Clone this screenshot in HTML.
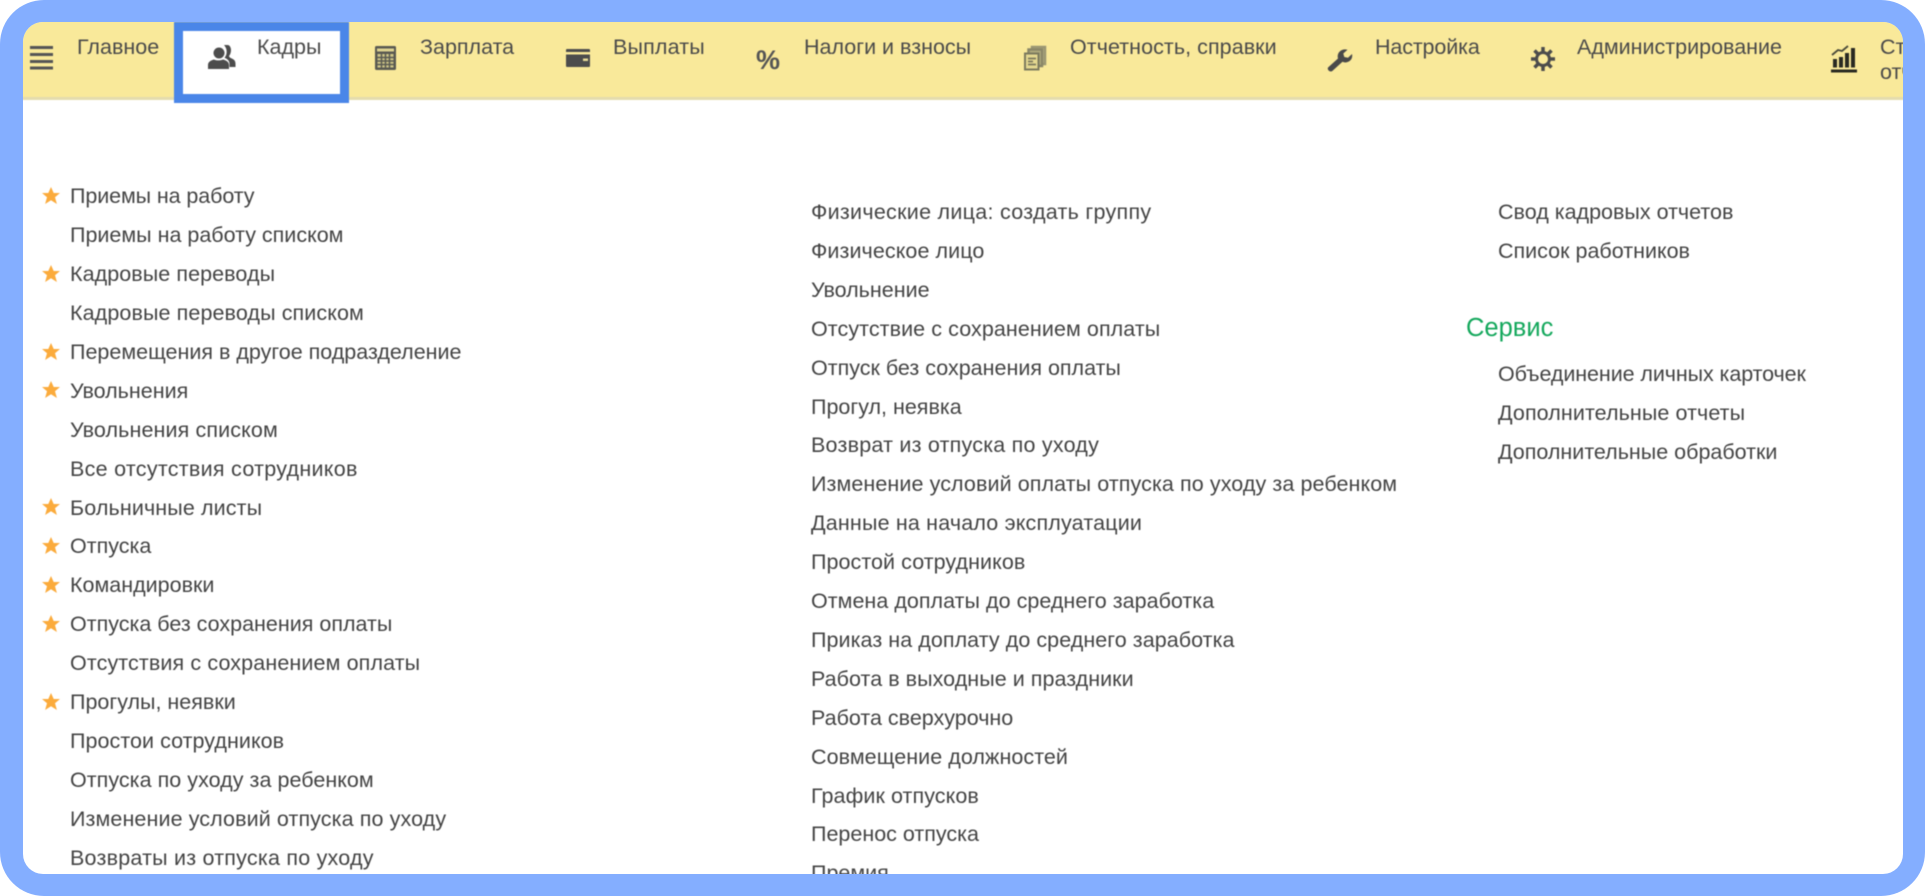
<!DOCTYPE html>
<html lang="ru">
<head>
<meta charset="utf-8">
<title>Кадры</title>
<style>
html,body{margin:0;padding:0;width:1925px;height:896px;overflow:hidden;background:#fff}
#frame{position:absolute;left:0;top:0;width:1925px;height:896px;box-sizing:border-box;background:#84aeff;border-radius:44px;overflow:hidden}
#in{position:absolute;left:23px;top:22px;width:1880px;height:852px;background:#fff;border-radius:20px;overflow:hidden}
#c{position:absolute;left:-23px;top:-22px;width:1925px;height:896px;font-family:"Liberation Sans",sans-serif;color:#444;filter:blur(.5px)}
#bar{position:absolute;left:0;top:0;width:1925px;height:97px;background:#f9e99a;border-bottom:3px solid #e4dcae;box-sizing:content-box}
#sel{position:absolute;left:174px;top:22px;width:175px;height:81px;box-sizing:border-box;border:9px solid #4a86e8;background:#fff}
.n{position:absolute;font-size:21.5px;line-height:24px;white-space:nowrap;color:#4a4a4a}
.t{position:absolute;font-size:21.5px;line-height:39px;height:39px;white-space:nowrap}
.u{margin-top:1px}
.s{position:absolute;left:41px;width:20px;height:20px}
svg.i{position:absolute;overflow:visible}
</style>
</head>
<body>
<div id="frame"><div id="in"><div id="c">
<div id="bar"></div>
<div id="sel"></div>

<svg class="i" style="left:30px;top:46px" width="24" height="24" viewBox="0 0 24 24" fill="#555"><rect y="0" width="23" height="3"/><rect y="7" width="23" height="3"/><rect y="14" width="23" height="3"/><rect y="20.5" width="23" height="3"/></svg>
<div class="n" style="left:77px;top:34.5px">Главное</div>

<svg class="i" style="left:208px;top:44px" width="28" height="26" viewBox="0 0 28 26" fill="#4c4c4c"><path d="M16 1h3.500c2.200 0 3.500 2.500 3.500 5 0 2.500-.8 4.700-2 6 .3 1.200 1 1.700 3 2.600 2.300 1 3.500 2.300 3.500 5.400v3h-6v-3c0-3-2-5-5-6.200 1.800-2 2.500-4.800 2-7.800-.3-2-1.200-3.500-2.500-5z"/><circle cx="11" cy="9" r="5.500"/><path d="M0 25v-4c0-3 2.500-4.500 6-5.500 1.500 1.200 7 1.200 9 0 3.500 1 6 2.500 6 5.500v4z"/></svg>
<div class="n" style="left:257px;top:34.5px">Кадры</div>

<svg class="i" style="left:375px;top:46px" width="21" height="24" viewBox="0 0 21 24"><rect width="21" height="24" rx="1.500" fill="#5a5a52"/><rect x="2" y="2.500" width="17" height="3" fill="#ddd390"/><path d="M2.500 8h16v13.500h-16z" fill="#cfc687"/><path d="M6.500 8v14M10.500 8v14M14.500 8v14M2 11.500h17M2 15h17M2 18.500h17" stroke="#5a5a52" stroke-width="1.500"/></svg>
<div class="n" style="left:420px;top:34.5px">Зарплата</div>

<svg class="i" style="left:566px;top:49px" width="24" height="18" viewBox="0 0 24 18" fill="#4c4c4c"><path d="M1 0h22a1 1 0 0 1 1 1v2H0V1a1 1 0 0 1 1-1zM0 5.500h24V17a1 1 0 0 1-1 1H1a1 1 0 0 1-1-1z"/><rect x="17" y="9.500" width="5" height="2.500" fill="#e8dc98"/></svg>
<div class="n" style="left:613px;top:34.5px;letter-spacing:.15px">Выплаты</div>

<div class="n" style="left:756px;top:47px;font-size:27px;line-height:26px;font-weight:bold;color:#555">%</div>
<div class="n" style="left:804px;top:34.5px">Налоги и взносы</div>

<svg class="i" style="left:1024px;top:46px" width="22" height="25" viewBox="0 0 22 25" fill="none"><path d="M8 4V1h13v17h-3" stroke="#9a9672" stroke-width="2.500" fill="#bdb682"/><path d="M4.500 7V3.500H18V20h-3" stroke="#8a8768" stroke-width="2.500" fill="#b0aa7c"/><rect x="1" y="7.500" width="13.500" height="16" stroke="#7c7a5e" stroke-width="2" fill="#e4d890"/><path d="M4 12.500h8M4 15.500h5M4 18.500h8" stroke="#7c7a5e" stroke-width="1.700"/></svg>
<div class="n" style="left:1070px;top:34.5px;letter-spacing:.06px">Отчетность, справки</div>

<svg class="i" style="left:1327px;top:47px" width="26" height="25" viewBox="0 0 26 25" fill="#4a4a4a"><path d="M1 20.500 11 11.500c-1-3.500.5-7 4-8.500 1.800-.8 3.800-.8 5.500-.2l-4.200 3.700 1 3.500 3.700.8L25 7c.7 2.800-.3 5.800-2.800 7.300-2.300 1.400-4.700 1.500-6.700.5L5.300 24c-1 .7-2.500.6-3.500-.4-1.100-1-1.300-2.200-.8-3.100z"/></svg>
<div class="n" style="left:1375px;top:34.5px;letter-spacing:-.13px">Настройка</div>

<svg class="i" style="left:1531px;top:47px" width="24" height="24" viewBox="0 0 24 24"><g stroke="#4c4c4c" stroke-width="3.500"><path d="M12 0v24M0 12h24M3.500 3.500l17 17M20.500 3.500l-17 17"/></g><circle cx="12" cy="12" r="8" fill="#4c4c4c"/><circle cx="12" cy="12" r="5" fill="#f9e99a"/></svg>
<div class="n" style="left:1577px;top:34.5px">Администрирование</div>

<svg class="i" style="left:1831px;top:45px" width="26" height="28" viewBox="0 0 26 28"><path d="M1 10 7 5l4 1 6-5" fill="none" stroke="#4a4a3a" stroke-width="1.800"/><g fill="#2a2a22"><rect x="2" y="14" width="4" height="8.500"/><rect x="8" y="12" width="4" height="10.500"/><rect x="14" y="8" width="4" height="14.500"/><rect x="20" y="3" width="4" height="19.500"/><rect x="0" y="24.500" width="26" height="3"/></g></svg>
<div class="n" style="left:1880px;top:34.5px">Ст</div>
<div class="n" style="left:1880px;top:60px">отчеты</div>

<div class="t" style="left:70px;top:177px;letter-spacing:-.1px">Приемы на работу</div>
<div class="t" style="left:70px;top:216px">Приемы на работу списком</div>
<div class="t" style="left:70px;top:255px;letter-spacing:.07px">Кадровые переводы</div>
<div class="t" style="left:70px;top:294px;letter-spacing:.1px">Кадровые переводы списком</div>
<div class="t" style="left:70px;top:333px">Перемещения в другое подразделение</div>
<div class="t" style="left:70px;top:372px">Увольнения</div>
<div class="t" style="left:70px;top:411px;letter-spacing:.12px">Увольнения списком</div>
<div class="t" style="left:70px;top:450px;letter-spacing:.28px">Все отсутствия сотрудников</div>
<div class="t" style="left:70px;top:489px;letter-spacing:.12px">Больничные листы</div>
<div class="t" style="left:70px;top:527px">Отпуска</div>
<div class="t" style="left:70px;top:566px">Командировки</div>
<div class="t" style="left:70px;top:605px">Отпуска без сохранения оплаты</div>
<div class="t" style="left:70px;top:644px;letter-spacing:.12px">Отсутствия с сохранением оплаты</div>
<div class="t" style="left:70px;top:683px">Прогулы, неявки</div>
<div class="t" style="left:70px;top:722px;letter-spacing:.05px">Простои сотрудников</div>
<div class="t" style="left:70px;top:761px;letter-spacing:.04px">Отпуска по уходу за ребенком</div>
<div class="t" style="left:70px;top:800px;letter-spacing:.1px">Изменение условий отпуска по уходу</div>
<div class="t" style="left:70px;top:839px;letter-spacing:.22px">Возвраты из отпуска по уходу</div>

<svg class="s" style="top:186px" viewBox="0 0 20 20"><path fill="#fbab3c" d="M10 1l2.700 6h6.300l-5 4.200 1.900 6.800L10 14.300 4.100 18 6 11.200 1 7h6.300z"/></svg>
<svg class="s" style="top:264px" viewBox="0 0 20 20"><path fill="#fbab3c" d="M10 1l2.700 6h6.300l-5 4.200 1.900 6.800L10 14.300 4.100 18 6 11.200 1 7h6.300z"/></svg>
<svg class="s" style="top:342px" viewBox="0 0 20 20"><path fill="#fbab3c" d="M10 1l2.700 6h6.300l-5 4.200 1.900 6.800L10 14.300 4.100 18 6 11.200 1 7h6.300z"/></svg>
<svg class="s" style="top:380px" viewBox="0 0 20 20"><path fill="#fbab3c" d="M10 1l2.700 6h6.300l-5 4.200 1.900 6.800L10 14.300 4.100 18 6 11.200 1 7h6.300z"/></svg>
<svg class="s" style="top:497px" viewBox="0 0 20 20"><path fill="#fbab3c" d="M10 1l2.700 6h6.300l-5 4.200 1.900 6.800L10 14.300 4.100 18 6 11.200 1 7h6.300z"/></svg>
<svg class="s" style="top:536px" viewBox="0 0 20 20"><path fill="#fbab3c" d="M10 1l2.700 6h6.300l-5 4.200 1.900 6.800L10 14.300 4.100 18 6 11.200 1 7h6.300z"/></svg>
<svg class="s" style="top:575px" viewBox="0 0 20 20"><path fill="#fbab3c" d="M10 1l2.700 6h6.300l-5 4.200 1.900 6.800L10 14.300 4.100 18 6 11.200 1 7h6.300z"/></svg>
<svg class="s" style="top:614px" viewBox="0 0 20 20"><path fill="#fbab3c" d="M10 1l2.700 6h6.300l-5 4.200 1.900 6.800L10 14.300 4.100 18 6 11.200 1 7h6.300z"/></svg>
<svg class="s" style="top:692px" viewBox="0 0 20 20"><path fill="#fbab3c" d="M10 1l2.700 6h6.300l-5 4.200 1.900 6.800L10 14.300 4.100 18 6 11.200 1 7h6.300z"/></svg>

<div class="t u" style="left:811px;top:192px;letter-spacing:.28px">Физические лица: создать группу</div>
<div class="t u" style="left:811px;top:231px;letter-spacing:.08px">Физическое лицо</div>
<div class="t u" style="left:811px;top:270px">Увольнение</div>
<div class="t u" style="left:811px;top:309px;letter-spacing:.08px">Отсутствие с сохранением оплаты</div>
<div class="t u" style="left:811px;top:348px">Отпуск без сохранения оплаты</div>
<div class="t u" style="left:811px;top:387px">Прогул, неявка</div>
<div class="t u" style="left:811px;top:425px;letter-spacing:.22px">Возврат из отпуска по уходу</div>
<div class="t u" style="left:811px;top:464px;letter-spacing:.09px">Изменение условий оплаты отпуска по уходу за ребенком</div>
<div class="t u" style="left:811px;top:503px;letter-spacing:.17px">Данные на начало эксплуатации</div>
<div class="t u" style="left:811px;top:542px;letter-spacing:.06px">Простой сотрудников</div>
<div class="t u" style="left:811px;top:581px;letter-spacing:.03px">Отмена доплаты до среднего заработка</div>
<div class="t u" style="left:811px;top:620px;letter-spacing:.06px">Приказ на доплату до среднего заработка</div>
<div class="t u" style="left:811px;top:659px;letter-spacing:.04px">Работа в выходные и праздники</div>
<div class="t u" style="left:811px;top:698px">Работа сверхурочно</div>
<div class="t u" style="left:811px;top:737px;letter-spacing:.06px">Совмещение должностей</div>
<div class="t u" style="left:811px;top:776px;letter-spacing:.08px">График отпусков</div>
<div class="t u" style="left:811px;top:814px">Перенос отпуска</div>
<div class="t u" style="left:811px;top:853px">Премия</div>

<div class="t u" style="left:1498px;top:192px">Свод кадровых отчетов</div>
<div class="t u" style="left:1498px;top:231px">Список работников</div>
<div class="t u" style="left:1466px;top:308px;font-size:25.5px;color:#14a85c">Сервис</div>
<div class="t u" style="left:1498px;top:354px;letter-spacing:-.09px">Объединение личных карточек</div>
<div class="t u" style="left:1498px;top:393px;letter-spacing:.09px">Дополнительные отчеты</div>
<div class="t u" style="left:1498px;top:432px">Дополнительные обработки</div>
</div></div></div>
</body>
</html>
